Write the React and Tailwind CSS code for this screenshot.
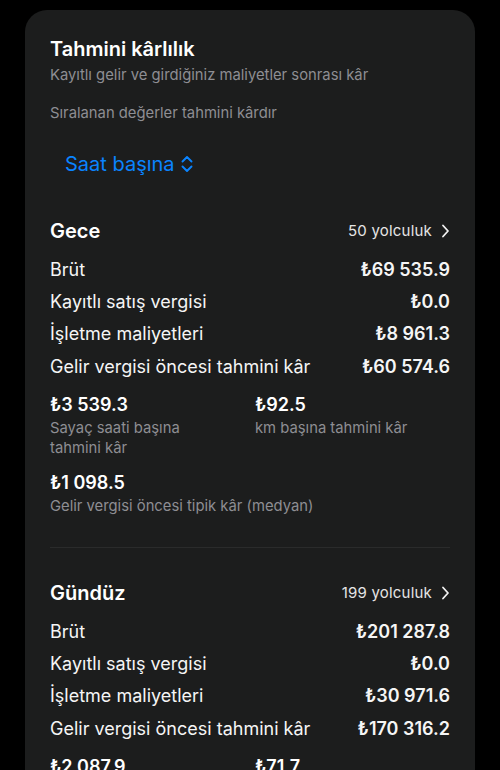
import React from "react";

const font = { fontFamily: "Inter, 'Noto Sans', 'DejaVu Sans', sans-serif" };

function ChevronRight() {
  return (
    <svg width="9" height="14" viewBox="0 0 9 14" fill="none" className="ml-[9px]">
      <path d="M2 1.5 L7 7 L2 12.5" stroke="#f2f2f2" strokeWidth="1.8" strokeLinecap="round" strokeLinejoin="round" />
    </svg>
  );
}

function UpDown() {
  return (
    <svg width="12" height="18" viewBox="0 0 12 18" fill="none" className="ml-[6px]">
      <path d="M1.5 6.5 L6 2 L10.5 6.5" stroke="#0a84ff" strokeWidth="1.9" strokeLinecap="round" strokeLinejoin="round" />
      <path d="M1.5 11.5 L6 16 L10.5 11.5" stroke="#0a84ff" strokeWidth="1.9" strokeLinecap="round" strokeLinejoin="round" />
    </svg>
  );
}

function Row({ label, value }) {
  return (
    <div className="flex justify-between items-center h-[32.3px] text-[18px] text-[#f5f5f5]">
      <span>{label}</span>
      <span className="font-semibold">{value}</span>
    </div>
  );
}

function Section({ title, trips, rows, cells, median }) {
  return (
    <div>
      <div className="flex justify-between items-center h-[36px]">
        <span className="text-[20px] font-semibold text-white">{title}</span>
        <span className="flex items-center text-[15px] text-[#e5e5e5] tracking-[0.2px]">
          {trips}
          <ChevronRight />
        </span>
      </div>
      <div className="mt-[4px]">
        {rows.map((r) => (
          <Row key={r[0]} label={r[0]} value={r[1]} />
        ))}
      </div>
      <div className="grid grid-cols-2 gap-x-[10px] mt-[10px]">
        {cells.map((c) => (
          <div key={c[1]}>
            <div className="text-[18px] font-semibold text-white leading-[26px]">{c[0]}</div>
            <div className="text-[14.8px] text-[#8e8e93] leading-[20px] pr-[40px]">{c[1]}</div>
          </div>
        ))}
      </div>
      {median && (
        <div className="mt-[12px]">
          <div className="text-[18px] font-semibold text-white leading-[26px]">{median[0]}</div>
          <div className="text-[14.8px] text-[#8e8e93] leading-[20px]">{median[1]}</div>
        </div>
      )}
    </div>
  );
}

export default function App() {
  return (
    <div className="bg-black h-[770px] w-[500px] pt-[10px] px-[25px] overflow-hidden" style={font}>
      <div className="bg-[#1c1d1d] rounded-[22px] px-[25px] pt-[26px] pb-[30px] min-h-[800px]">
        <div className="text-[20px] font-semibold text-white leading-[26px]">Tahmini kârlılık</div>
        <div className="text-[14.8px] text-[#8e8e93] leading-[20px] mt-[3px]">Kayıtlı gelir ve girdiğiniz maliyetler sonrası kâr</div>
        <div className="text-[14.8px] text-[#8e8e93] leading-[20px] mt-[18px]">Sıralanan değerler tahmini kârdır</div>
        <div className="flex items-center mt-[28px] ml-[15px] text-[20px] text-[#0a84ff] leading-[26px]">
          Saat başına
          <UpDown />
        </div>
        <div className="mt-[36px]">
          <Section
            title="Gece"
            trips="50 yolculuk"
            rows={[
              ["Brüt", "₺69 535.9"],
              ["Kayıtlı satış vergisi", "₺0.0"],
              ["İşletme maliyetleri", "₺8 961.3"],
              ["Gelir vergisi öncesi tahmini kâr", "₺60 574.6"],
            ]}
            cells={[
              ["₺3 539.3", "Sayaç saati başına tahmini kâr"],
              ["₺92.5", "km başına tahmini kâr"],
            ]}
            median={["₺1 098.5", "Gelir vergisi öncesi tipik kâr (medyan)"]}
          />
        </div>
        <div className="h-px bg-[#2a2b2b] mt-[31px] mb-[27px]" />
        <Section
          title="Gündüz"
          trips="199 yolculuk"
          rows={[
            ["Brüt", "₺201 287.8"],
            ["Kayıtlı satış vergisi", "₺0.0"],
            ["İşletme maliyetleri", "₺30 971.6"],
            ["Gelir vergisi öncesi tahmini kâr", "₺170 316.2"],
          ]}
          cells={[
            ["₺2 087.9", "Sayaç saati başına tahmini kâr"],
            ["₺71.7", "km başına tahmini kâr"],
          ]}
        />
      </div>
    </div>
  );
}
